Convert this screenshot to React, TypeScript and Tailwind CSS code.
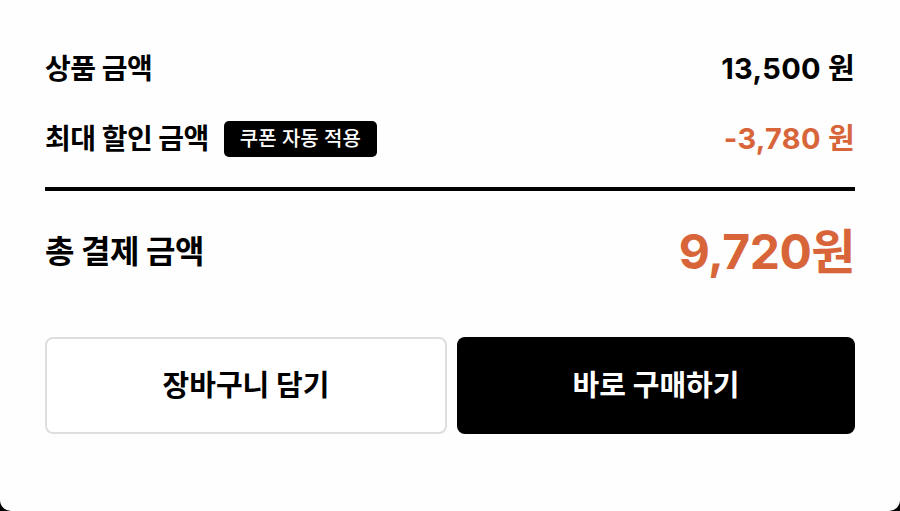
import React from 'react';

const KR = { fontFamily: 'Inter, "Noto Sans CJK KR", sans-serif' };

function PriceRow({ label, children, badge }: { label: string; children: React.ReactNode; badge?: string }) {
  return (
    <div className="flex h-9 items-center justify-between">
      <div className="flex items-center gap-[15px]">
        <span className="text-[28px] font-bold tracking-[-0.5px] text-black">{label}</span>
        {badge && (
          <span className="flex h-9 items-center rounded-[5px] bg-black px-4 text-[20px] font-medium text-white">
            {badge}
          </span>
        )}
      </div>
      {children}
    </div>
  );
}

export default function App() {
  return (
    <div className="h-[511px] w-[900px] bg-black" style={KR}>
      <div className="flex h-full flex-col rounded-b-[11px] bg-[#fefefe] px-[45px] pt-[51px]">
        <PriceRow label="상품 금액">
          <span className="text-[29px] font-bold tracking-[0.3px] text-black">13,500 원</span>
        </PriceRow>
        <div className="mt-[34px]">
          <PriceRow label="최대 할인 금액" badge="쿠폰 자동 적용">
            <span className="text-[29px] font-bold tracking-[0.3px] text-[#d8653a]">-3,780 원</span>
          </PriceRow>
        </div>

        <div className="mt-[30px] h-1 bg-black" />

        <div className="mt-9 flex h-[50px] items-center justify-between">
          <span className="text-[32px] font-bold tracking-[-0.5px] text-black">총 결제 금액</span>
          <span className="text-[48px] font-bold tracking-[-0.5px] text-[#d8653a]">9,720원</span>
        </div>

        <div className="mt-[60px] flex gap-[10px]">
          <button className="flex h-[97px] flex-1 items-center justify-center rounded-[8px] border-2 border-[#dedede] bg-white text-[29px] font-bold text-black">
            장바구니 담기
          </button>
          <button className="flex h-[97px] flex-1 items-center justify-center rounded-[8px] bg-black text-[29px] font-bold text-white">
            바로 구매하기
          </button>
        </div>
      </div>
    </div>
  );
}
